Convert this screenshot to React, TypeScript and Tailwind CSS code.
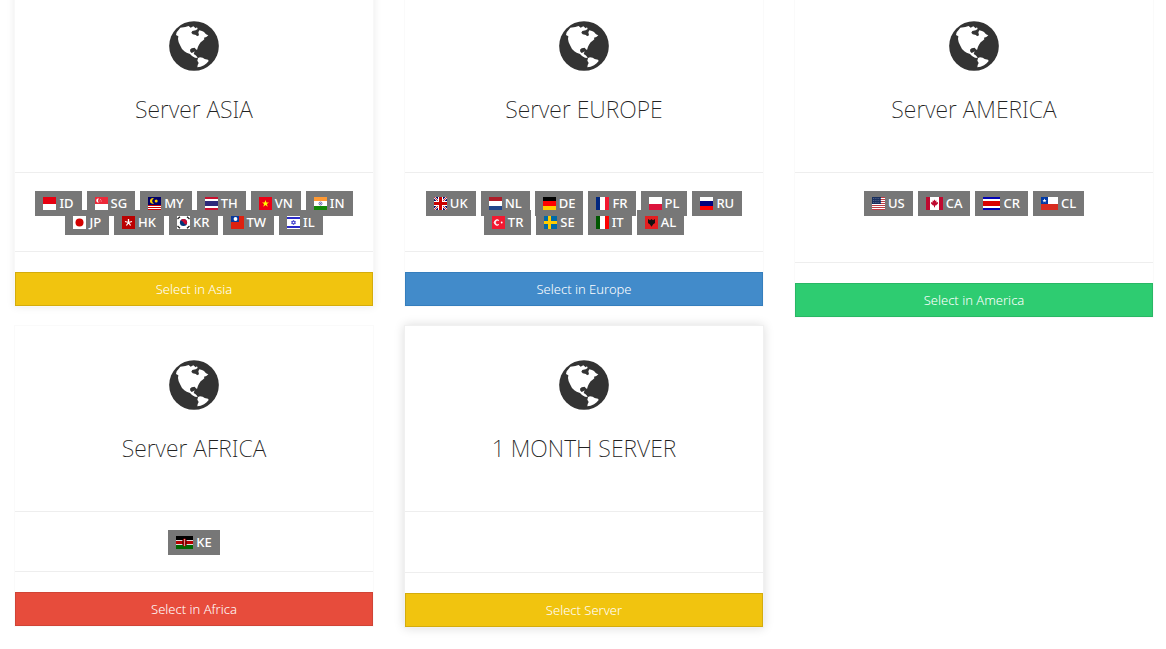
import type { ReactNode } from "react";

const FONT = "font-['Noto_Sans','Open_Sans',sans-serif]";

function Globe() {
  return (
    <svg viewBox="0 0 150 150" className="size-[50px]" aria-hidden="true">
      <circle cx="75" cy="75" r="74.5" fill="#333" />
      <path
        fill="#fff"
        d="M34 20L49 18 59 15 65 20 73 16 80 22 84 19 86 24 80 28 70 30 67 35 71 40 81 42 84 46 90 43 88 34 91 28 99 30 105 33 111 40 118 43 112 48 105 50 106 55 100 60 95 64 90 71 87 77 84 87 80 84 77 80 68 82 63 86 64 92 68 96 73 94 77 91 74 99 79 102 83 106 86 111 78 110 69 105 63 99 53 95 46 91 39 84 34 74 29 64 27 54 28 46 21 42 23 34 28 28Z"
      />
      <path
        fill="#fff"
        d="M87 111L93 109 101 110 107 114 117 116 119 120 113 127 105 133 95 137 85 139 86 132 89 126 85 119Z"
      />
    </svg>
  );
}

const bar = (y: number, h: number, fill: string) => (
  <rect x="0" y={y} width="17" height={h} fill={fill} />
);
const col = (x: number, w: number, fill: string) => (
  <rect x={x} y="0" width={w} height="13" fill={fill} />
);

const flags: Record<string, ReactNode> = {
  ID: <>{bar(0, 7, "#e70011")}{bar(7, 6, "#fff")}</>,
  SG: (
    <>
      {bar(0, 7, "#ed2939")}{bar(7, 6, "#fff")}
      <path d="M4 1.5A2.1 2.1 0 1 0 4 5.5 2.5 2.5 0 0 1 4 1.5Z" fill="#fff" />
      <path d="M5 2.5h.8M4.5 4h.8M6.2 4h.8" stroke="#fff" strokeWidth=".6" />
    </>
  ),
  MY: (
    <>
      {bar(0, 13, "#fff")}{bar(8, 1, "#cc0001")}{bar(10, 1, "#cc0001")}{bar(12, 1, "#cc0001")}
      <rect width="13" height="8" fill="#010066" />
      <path d="M6 1.4A2.8 2.8 0 1 0 6 6.4 2.6 2.6 0 0 1 6 1.4Z" fill="#fc0" />
      <circle cx="8.2" cy="4" r="1.5" fill="#fc0" />
    </>
  ),
  TH: <>{bar(0, 13, "#fff")}{bar(0, 2, "#c8102e")}{bar(4, 5, "#2d2a7a")}{bar(11, 2, "#c8102e")}</>,
  VN: (
    <>
      {bar(0, 13, "#ec0015")}
      <path d="M6.5 3l.9 2.5H10L7.9 7.1l.8 2.6-2.2-1.6-2.2 1.6.8-2.6L3 5.5h2.6Z" fill="#ff0" />
    </>
  ),
  IN: (
    <>
      {bar(0, 4, "#f93")}{bar(4, 5, "#fff")}{bar(9, 4, "#128807")}
      <circle cx="6.5" cy="6.5" r="1.5" fill="none" stroke="#338" strokeWidth=".7" />
      <circle cx="6.5" cy="6.5" r=".5" fill="#338" />
    </>
  ),
  JP: <>{bar(0, 13, "#fff")}<circle cx="6.5" cy="6.5" r="4" fill="#d30000" /></>,
  HK: (
    <>
      {bar(0, 13, "#ba0000")}
      <path d="M6.5 6.5V3M6.5 6.5L10 5.5M6.5 6.5L8.6 9.5M6.5 6.5L4.4 9.5M6.5 6.5L3 5.5" stroke="#fff" strokeWidth="1.3" />
    </>
  ),
  KR: (
    <>
      {bar(0, 13, "#fff")}
      <circle cx="6.5" cy="6.5" r="3.6" fill="#003478" />
      <path d="M3.5 4.5A3.6 3.6 0 0 1 9.9 5.3 3.6 3.6 0 0 1 9.5 8.5Q8 9 6.5 6.5 5 4 3.5 4.5Z" fill="#c60c30" />
      <path d="M.5 3L3 .8M10 .8L12.5 3M.5 10L3 12.2M10 12.2L12.5 10" stroke="#222" strokeWidth="1.3" />
    </>
  ),
  TW: (
    <>
      {bar(0, 13, "#de2110")}
      <rect width="8" height="6" fill="#08399c" />
      <circle cx="4.5" cy="3" r="1.9" fill="#fff" />
    </>
  ),
  IL: (
    <>
      {bar(0, 13, "#fff")}{bar(1, 2, "#2a2ac8")}{bar(10, 2, "#2a2ac8")}
      <path d="M6.5 4.2L8.5 7.6H4.5ZM6.5 8.8L4.5 5.4H8.5Z" fill="none" stroke="#2a2ac8" strokeWidth=".7" />
    </>
  ),
  UK: (
    <>
      {bar(0, 13, "#006")}
      <path d="M0 0L13 13M13 0L0 13" stroke="#fff" strokeWidth="2" />
      <path d="M0 0L13 13M13 0L0 13" stroke="#c00" strokeWidth=".8" />
      <path d="M6.5 0V13M0 6.5H13" stroke="#fff" strokeWidth="5" />
      <path d="M6.5 0V13M0 6.5H13" stroke="#c00" strokeWidth="3" />
    </>
  ),
  NL: <>{bar(0, 4, "#ae1c28")}{bar(4, 5, "#fff")}{bar(9, 4, "#21468b")}</>,
  DE: <>{bar(0, 4, "#000")}{bar(4, 5, "#f00")}{bar(9, 4, "#fc0")}</>,
  FR: <>{col(0, 4, "#00267f")}{col(4, 5, "#fff")}{col(9, 4, "#f31830")}</>,
  PL: <>{bar(0, 7, "#fff")}{bar(7, 6, "#dc143c")}</>,
  RU: <>{bar(0, 4, "#fff")}{bar(4, 5, "#01017e")}{bar(9, 4, "#fe0101")}</>,
  TR: (
    <>
      {bar(0, 13, "#f31930")}
      <path d="M7 4.5A2.8 2.8 0 1 0 7 8.5 2.3 2.3 0 1 1 7 4.5Z" fill="#fff" stroke="#fff" strokeWidth=".6" />
      <circle cx="9.7" cy="6.5" r=".9" fill="#fff" />
    </>
  ),
  SE: <>{bar(0, 13, "#006aa7")}{col(4, 3, "#fecc00")}{bar(5, 3, "#fecc00")}</>,
  IT: <>{col(0, 4, "#005700")}{col(4, 5, "#fff")}{col(9, 4, "#fc0000")}</>,
  AL: (
    <>
      {bar(0, 13, "#e41e20")}
      <path d="M3 3l2 1.2L6.5 3 8 4.2 10 3v4L8.2 8.3 6.5 10.8 4.8 8.3 3 7Z" fill="#111" />
    </>
  ),
  US: (
    <>
      {bar(0, 13, "#fff")}
      {[0, 2, 4, 6, 8, 10, 12].map((y) => (
        <rect key={y} y={y} width="13" height="1" fill="#bd3d44" />
      ))}
      <rect width="9" height="7" fill="#192f5d" />
      <path d="M1 1.5h8M1 3.5h8M1 5.5h8" stroke="#8f9cbd" strokeWidth=".6" strokeDasharray=".8 1" />
    </>
  ),
  CA: (
    <>
      {bar(0, 13, "#fff")}{col(0, 4, "#bf0a30")}{col(13, 4, "#bf0a30")}
      <path d="M8.5 2.5l1 1.5 1-.4-.2 2 1.5-.6.2 1.4-2 2H9v1.8H8V8.4H7L5 6.4 5.2 5l1.5.6-.2-2 1 .4Z" fill="#bf0a30" />
    </>
  ),
  CR: <>{bar(0, 13, "#fff")}{bar(0, 2, "#0000b4")}{bar(4, 5, "#d90000")}{bar(11, 2, "#0000b4")}</>,
  CL: (
    <>
      {bar(0, 7, "#fff")}{bar(7, 6, "#d72b1f")}
      <rect width="7" height="7" fill="#0039a6" />
      <path d="M3.5 1.5l.6 1.4h1.4l-1.1 1 .4 1.5-1.3-.9-1.3.9.4-1.5-1.1-1h1.4Z" fill="#fff" />
    </>
  ),
  KE: (
    <>
      {bar(0, 4, "#000")}{bar(4, 1, "#ddd")}{bar(5, 3, "#b80000")}{bar(8, 1, "#ddd")}{bar(9, 4, "#060")}
      <ellipse cx="8.5" cy="6.5" rx="2" ry="4" fill="#b00" />
      <path d="M8.5 3v7" stroke="#eee" strokeWidth=".6" />
      <path d="M6.8 4v5M10.2 4v5" stroke="#000" strokeWidth=".6" />
    </>
  ),
};

const WIDE = ["CA", "CR", "CL", "KE"];

function Badge({ code }: { code: string }) {
  const w = WIDE.includes(code) ? 17 : 13;
  return (
    <li className="-my-[3px] flex h-[25px] items-center gap-[3px] bg-[#777] px-2 text-[13px] leading-[25px] font-medium text-white">
      <svg width={w} height="13" viewBox={`0 0 ${w} 13`} aria-hidden="true">
        {flags[code]}
      </svg>
      {code}
    </li>
  );
}

type Server = { title: string; action: string; codes: string[]; button: string; list: string; card: string };

const servers: Server[] = [
  {
    title: "Server ASIA",
    action: "Select in Asia",
    codes: ["ID", "SG", "MY", "TH", "VN", "IN", "JP", "HK", "KR", "TW", "IL"],
    button: "bg-[#f1c40f] border-[#d4ac0d]",
    list: "",
    card: "border-[#f8f8f8] shadow-[0_0_8px_rgba(0,0,0,0.08)]",
  },
  {
    title: "Server EUROPE",
    action: "Select in Europe",
    codes: ["UK", "NL", "DE", "FR", "PL", "RU", "TR", "SE", "IT", "AL"],
    button: "bg-[#428bca] border-[#357ebd]",
    list: "",
    card: "border-[#fafafa]",
  },
  {
    title: "Server AMERICA",
    action: "Select in America",
    codes: ["US", "CA", "CR", "CL"],
    button: "bg-[#2ecc71] border-[#29b765]",
    list: "min-h-[89px]",
    card: "border-[#fafafa]",
  },
  {
    title: "Server AFRICA",
    action: "Select in Africa",
    codes: ["KE"],
    button: "bg-[#e74c3c] border-[#d04436]",
    list: "",
    card: "border-[#fafafa]",
  },
  {
    title: "1 MONTH SERVER",
    action: "Select Server",
    codes: [],
    button: "bg-[#f1c40f] border-[#d4ac0d]",
    list: "min-h-[60px]",
    card: "border-[#f0f0f0] shadow-[0_0_10px_rgba(0,0,0,0.14)]",
  },
];

function ServerCard({ title, action, codes, button, list, card }: Server) {
  return (
    <section className={`flex flex-col border bg-white ${card}`}>
      <header className="flex flex-col items-center pt-[34px] pb-[47px]">
        <Globe />
        <h3 className="mt-[22px] text-[23px] leading-8 font-extralight text-[#222]">{title}</h3>
      </header>
      <hr className="border-[#eee]" />
      <ul className={`flex flex-wrap content-start justify-center gap-x-[5px] pt-[21px] pb-[19px] ${list}`}>
        {codes.map((code) => (
          <Badge key={code} code={code} />
        ))}
      </ul>
      <hr className="border-[#eee]" />
      <button
        type="button"
        className={`mt-5 h-[34px] border text-[13px] leading-5 font-light text-white ${button}`}
      >
        {action}
      </button>
    </section>
  );
}

export default function App() {
  return (
    <main
      className={`-mt-[14px] grid grid-cols-3 items-start gap-x-[30px] gap-y-[7px] bg-white pr-3 pb-5 pl-[14px] ${FONT}`}
    >
      {servers.map((server) => (
        <ServerCard key={server.title} {...server} />
      ))}
    </main>
  );
}
